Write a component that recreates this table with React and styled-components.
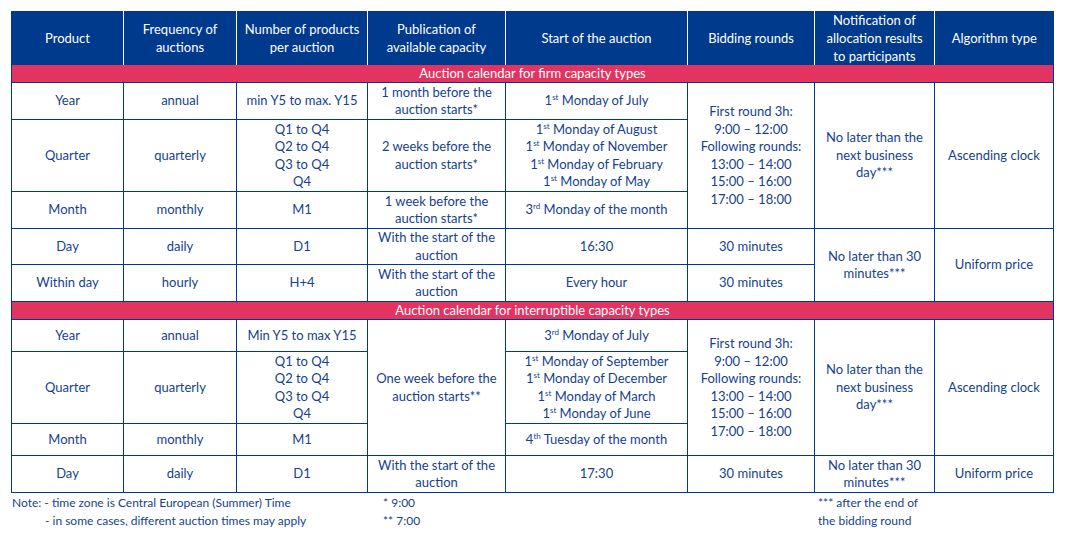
import React from 'react';
import styled, { createGlobalStyle } from 'styled-components';

const GlobalStyle = createGlobalStyle`
    body {
        margin: 0;
        background: #ffffff;
        font-family: Lato, "Liberation Sans", sans-serif;
    }
`;

const navy = '#003a8c';
const ink = '#163f8e';
const pink = '#e33361';

const Page = styled.div`
    padding: 11px 0 0 11px;
    width: 1042px;
`;

const Table = styled.table`
    border-collapse: collapse;
    table-layout: fixed;
    width: 1042px;
    font-size: 13px;
    line-height: 17.5px;
    color: ${ink};
`;

const HeadCell = styled.th`
    background: ${navy};
    color: #ffffff;
    font-weight: 400;
    line-height: 18px;
    height: 54px;
    padding: 0 4px;
    border-left: 1px solid #ffffff;
    text-align: center;
    &:first-child {
        border-left: 1px solid ${navy};
    }
`;

const Band = styled.td`
    background: ${pink};
    color: #ffffff;
    height: 17px;
    line-height: 17px;
    padding: 0;
    text-align: center;
    border: 1px solid ${navy};
    border-top: none;
`;

const Row = styled.tr`
    height: ${(props) => props.$h}px;
`;

const Cell = styled.td`
    border: 1px solid ${navy};
    padding: 0 2px;
    text-align: center;
    vertical-align: middle;
`;

const Sup = styled.sup`
    font-size: 8px;
    line-height: 0;
    vertical-align: 5px;
`;

const Notes = styled.div`
    display: grid;
    grid-template-columns: 372px 435px 1fr;
    padding-top: 1px;
    font-size: 12px;
    line-height: 18px;
    color: ${ink};
`;

const NoteLine = styled.div`
    padding-left: ${(props) => props.$indent || 0}px;
`;

const FootCol = styled.div`
    padding-left: ${(props) => props.$pad || 0}px;
`;

const widths = [112, 113, 131, 138, 182, 127, 120, 119];

const headers = [
    'Product',
    'Frequency of auctions',
    'Number of products per auction',
    'Publication of available capacity',
    'Start of the auction',
    'Bidding rounds',
    'Notification of allocation results to participants',
    'Algorithm type',
];

const Ord = ({ n, s }) => (
    <>
        {n}
        <Sup>{s}</Sup>
    </>
);

const Lines = ({ items }) =>
    items.map((t, i) => (
        <React.Fragment key={i}>
            {t}
            {i < items.length - 1 && <br />}
        </React.Fragment>
    ));

const rounds = (
    <Lines
        items={[
            'First round 3h:',
            '9:00 – 12:00',
            'Following rounds:',
            '13:00 – 14:00',
            '15:00 – 16:00',
            '17:00 – 18:00',
        ]}
    />
);

const nextDay = <Lines items={['No later than the', 'next business', 'day***']} />;
const thirty = <Lines items={['No later than 30', 'minutes***']} />;
const withStart = <Lines items={['With the start of the', 'auction']} />;
const quarters = <Lines items={['Q1 to Q4', 'Q2 to Q4', 'Q3 to Q4', 'Q4']} />;

const App = () => {
    return (
        <Page>
            <GlobalStyle />
            <Table>
                <colgroup>
                    {widths.map((w, i) => (
                        <col key={i} style={{ width: w }} />
                    ))}
                </colgroup>
                <thead>
                    <tr>
                        {headers.map((h) => (
                            <HeadCell key={h}>{h}</HeadCell>
                        ))}
                    </tr>
                </thead>
                <tbody>
                    <tr>
                        <Band colSpan={8}>Auction calendar for firm capacity types</Band>
                    </tr>
                    <Row $h={37}>
                        <Cell>Year</Cell>
                        <Cell>annual</Cell>
                        <Cell>min Y5 to max. Y15</Cell>
                        <Cell>
                            <Lines items={['1 month before the', 'auction starts*']} />
                        </Cell>
                        <Cell>
                            <Ord n="1" s="st" /> Monday of July
                        </Cell>
                        <Cell rowSpan={3}>{rounds}</Cell>
                        <Cell rowSpan={3}>{nextDay}</Cell>
                        <Cell rowSpan={3}>Ascending clock</Cell>
                    </Row>
                    <Row $h={72}>
                        <Cell>Quarter</Cell>
                        <Cell>quarterly</Cell>
                        <Cell>{quarters}</Cell>
                        <Cell>
                            <Lines items={['2 weeks before the', 'auction starts*']} />
                        </Cell>
                        <Cell>
                            <Ord n="1" s="st" /> Monday of August
                            <br />
                            <Ord n="1" s="st" /> Monday of November
                            <br />
                            <Ord n="1" s="st" /> Monday of February
                            <br />
                            <Ord n="1" s="st" /> Monday of May
                        </Cell>
                    </Row>
                    <Row $h={37}>
                        <Cell>Month</Cell>
                        <Cell>monthly</Cell>
                        <Cell>M1</Cell>
                        <Cell>
                            <Lines items={['1 week before the', 'auction starts*']} />
                        </Cell>
                        <Cell>
                            <Ord n="3" s="rd" /> Monday of the month
                        </Cell>
                    </Row>
                    <Row $h={36}>
                        <Cell>Day</Cell>
                        <Cell>daily</Cell>
                        <Cell>D1</Cell>
                        <Cell>{withStart}</Cell>
                        <Cell>16:30</Cell>
                        <Cell>30 minutes</Cell>
                        <Cell rowSpan={2}>{thirty}</Cell>
                        <Cell rowSpan={2}>Uniform price</Cell>
                    </Row>
                    <Row $h={37}>
                        <Cell>Within day</Cell>
                        <Cell>hourly</Cell>
                        <Cell>H+4</Cell>
                        <Cell>{withStart}</Cell>
                        <Cell>Every hour</Cell>
                        <Cell>30 minutes</Cell>
                    </Row>
                    <tr>
                        <Band colSpan={8}>Auction calendar for interruptible capacity types</Band>
                    </tr>
                    <Row $h={32}>
                        <Cell>Year</Cell>
                        <Cell>annual</Cell>
                        <Cell>Min Y5 to max Y15</Cell>
                        <Cell rowSpan={3}>
                            <Lines items={['One week before the', 'auction starts**']} />
                        </Cell>
                        <Cell>
                            <Ord n="3" s="rd" /> Monday of July
                        </Cell>
                        <Cell rowSpan={3}>{rounds}</Cell>
                        <Cell rowSpan={3}>{nextDay}</Cell>
                        <Cell rowSpan={3}>Ascending clock</Cell>
                    </Row>
                    <Row $h={72}>
                        <Cell>Quarter</Cell>
                        <Cell>quarterly</Cell>
                        <Cell>{quarters}</Cell>
                        <Cell>
                            <Ord n="1" s="st" /> Monday of September
                            <br />
                            <Ord n="1" s="st" /> Monday of December
                            <br />
                            <Ord n="1" s="st" /> Monday of March
                            <br />
                            <Ord n="1" s="st" /> Monday of June
                        </Cell>
                    </Row>
                    <Row $h={32}>
                        <Cell>Month</Cell>
                        <Cell>monthly</Cell>
                        <Cell>M1</Cell>
                        <Cell>
                            <Ord n="4" s="th" /> Tuesday of the month
                        </Cell>
                    </Row>
                    <Row $h={37}>
                        <Cell>Day</Cell>
                        <Cell>daily</Cell>
                        <Cell>D1</Cell>
                        <Cell>{withStart}</Cell>
                        <Cell>17:30</Cell>
                        <Cell>30 minutes</Cell>
                        <Cell>{thirty}</Cell>
                        <Cell>Uniform price</Cell>
                    </Row>
                </tbody>
            </Table>
            <Notes>
                <FootCol $pad={1}>
                    <NoteLine>Note: - time zone is Central European (Summer) Time</NoteLine>
                    <NoteLine $indent={33}>- in some cases, different auction times may apply</NoteLine>
                </FootCol>
                <FootCol>
                    <NoteLine>* 9:00</NoteLine>
                    <NoteLine>** 7:00</NoteLine>
                </FootCol>
                <FootCol>
                    <NoteLine>*** after the end of</NoteLine>
                    <NoteLine>the bidding round</NoteLine>
                </FootCol>
            </Notes>
        </Page>
    );
};

export default App;
